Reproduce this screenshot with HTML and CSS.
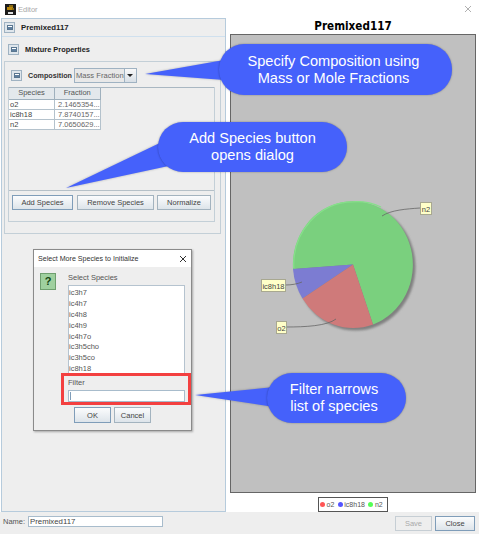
FILE: index.html
```html
<!DOCTYPE html>
<html lang="en">
<head>
<meta charset="utf-8">
<title>Editor</title>
<link rel="stylesheet" href="styles.css">
</head>
<body>
<div class="window">
  <header class="titlebar">
    <svg class="app-icon" viewBox="0 0 11 11"><rect width="11" height="11" fill="#1c1c1c"/><path d="M2 3h6v3H2z" fill="#b8860b"/><path d="M4 1h4v2H4zM7 4h2v2H7z" fill="#8a6a10"/><rect x="3" y="8" width="5" height="2" fill="#ddd"/></svg>
    <span class="title-text">Editor</span>
    <svg class="close-x" viewBox="0 0 8 8"><path d="M1 1l6 6M7 1l-6 6" stroke="#b0b0b0" stroke-width="1" fill="none"/></svg>
  </header>
  <main class="main">
    <section class="left">
      <div class="row-top">
        <span class="toggle"><i></i></span><b class="top-name">Premixed117</b>
      </div>
      <div class="row-mix">
        <span class="toggle"><i></i></span><b class="mix-name">Mixture Properties</b>
      </div>
      <div class="props">
        <div class="comp-row">
          <span class="toggle"><i></i></span>
          <b class="comp-label">Composition</b>
          <span class="combo"><span class="combo-text">Mass Fraction</span><span class="combo-arrow"></span></span>
        </div>
        <div class="group">
          <div class="table-frame">
            <table class="species-table">
              <thead><tr><th>Species</th><th>Fraction</th></tr></thead>
              <tbody>
                <tr><td>o2</td><td class="num">2.1465354...</td></tr>
                <tr><td>ic8h18</td><td class="num">7.8740157...</td></tr>
                <tr><td>n2</td><td class="num">7.0650629...</td></tr>
              </tbody>
            </table>
          </div>
          <div class="btn-row">
            <button class="btn focus btn-add">Add Species</button>
            <button class="btn btn-remove">Remove Species</button>
            <button class="btn btn-norm">Normalize</button>
          </div>
        </div>
      </div>
    </section>
    <section class="right">
      <h1 class="chart-title">Premixed117</h1>
      <div class="plot">
        <svg class="pie" viewBox="0 0 244 457">
          <defs><filter id="soft" x="-10%" y="-10%" width="120%" height="120%"><feGaussianBlur stdDeviation="1"/></filter></defs>
          <ellipse cx="124.500" cy="232" rx="60" ry="63.500" fill="#808080" filter="url(#soft)"/>
          <path d="M122 229.500 L142 289.500 A60 63.500 0 1 0 62 234 Z" fill="#7ad07e"/>
          <path d="M62.800 233 A59.500 63 0 0 1 122 166.800 A59.500 63 0 0 1 150 172" fill="none" stroke="#86e08a" stroke-width="1.200"/>
          <path d="M122 229.500 L62 234 A60 63.500 0 0 0 71.500 263.500 Z" fill="#7c7cd2"/>
          <path d="M122 229.500 L71.500 263.500 A60 63.500 0 0 0 142 289.500 Z" fill="#cf7a7a"/>
          <path d="M189 173 C175 174 160 175 151 181" fill="none" stroke="#666" stroke-width=".8"/>
          <path d="M54 250 C61 250 66 249 71 247" fill="none" stroke="#666" stroke-width=".8"/>
          <path d="M55 292 C74 292 96 291 105 284" fill="none" stroke="#666" stroke-width=".8"/>
          <g class="tip"><rect x="189.500" y="167.500" width="11" height="12"/><text x="195" y="176.500">n2</text></g>
          <g class="tip"><rect x="30.500" y="244.500" width="24" height="12"/><text x="42.500" y="253.500">ic8h18</text></g>
          <g class="tip"><rect x="45.500" y="286.500" width="10" height="12"/><text x="50.500" y="295.500">o2</text></g>
        </svg>
      </div>
      <div class="legend-row">
        <div class="legend">
          <i class="dot red"></i><span>o2</span>
          <i class="dot blue"></i><span>ic8h18</span>
          <i class="dot green"></i><span>n2</span>
        </div>
      </div>
    </section>
  </main>
  <footer class="footer">
    <label class="name-label">Name:</label>
    <span class="name-input">Premixed117</span>
    <span class="spacer"></span>
    <button class="btn disabled btn-save">Save</button>
    <button class="btn focus btn-close">Close</button>
  </footer>
</div>

<div class="dialog">
  <div class="dlg-title"><span>Select More Species to Initialize</span>
    <svg class="dlg-x" viewBox="0 0 8 8"><path d="M1 1l6 6M7 1l-6 6" stroke="#333" stroke-width="1" fill="none"/></svg>
  </div>
  <div class="dlg-body">
    <div class="q-icon">?</div>
    <div class="dlg-main">
      <div class="dlg-label">Select Species</div>
      <ul class="list">
        <li>ic3h7</li><li>ic4h7</li><li>ic4h8</li><li>ic4h9</li><li>ic4h7o</li><li>ic3h5cho</li><li>ic3h5co</li><li>ic8h18</li>
      </ul>
      <div class="dlg-label filter-label">Filter</div>
      <div class="filter-input"><i class="caret"></i></div>
    </div>
  </div>
  <div class="dlg-btns">
    <button class="btn focus btn-ok">OK</button>
    <button class="btn btn-cancel">Cancel</button>
  </div>
</div>

<div class="red-box"></div>

<svg class="tails" viewBox="0 0 479 534">
  <path d="M145 74 L224 60 L224 80 Z" fill="#4561fb"/>
  <path d="M66 188 L166 140 L178 164 Z" fill="#4561fb"/>
  <path d="M195 395 L274 387 L274 407 Z" fill="#4561fb"/>
</svg>
<div class="bubble b1">Specify Composition using<br>Mass or Mole Fractions</div>
<div class="bubble b2">Add Species button<br>opens dialog</div>
<div class="bubble b3">Filter narrows<br>list of species</div>
</body>
</html>
```

FILE: styles.css
```css
* { box-sizing: border-box; }
html, body { margin: 0; padding: 0; background: #fff; }
body {
  width: 479px; height: 534px; overflow: hidden; position: relative;
  font-family: "Liberation Sans", Arial, sans-serif; font-size: 7.500px; color: #444;
}
.window { width: 479px; height: 534px; display: flex; flex-direction: column; }

.titlebar { height: 18px; display: flex; align-items: center; padding: 0 6px 0 5px; flex: none; }
.app-icon { width: 11px; height: 11px; margin-right: 2px; }
.title-text { color: #a8a8a8; font-size: 7.500px; flex: 1; }
.close-x { width: 8px; height: 8px; margin-right: 1px; }

.main { flex: 1; display: flex; min-height: 0; }
.left {
  width: 225px; margin-left: 1px; background: #eeeeee;
  border: 1px solid #b6cbdc; display: flex; flex-direction: column; flex: none;
}
.row-top { height: 18px; display: flex; align-items: center; padding-left: 2px; border-bottom: 1px solid #cfe0ee; flex: none; }
.top-name { margin-left: 6px; color: #222; font-size: 7.800px; }
.row-mix { height: 24px; display: flex; align-items: center; padding-left: 6px; flex: none; }
.mix-name { margin-left: 6px; color: #222; font-size: 7.400px; }
.toggle {
  width: 11px; height: 11px; border: 1px solid #9fb2c2; background: #dfe6ec;
  display: inline-flex; align-items: center; justify-content: center; flex: none;
}
.toggle i { width: 6px; height: 5px; background: #5f7f9f; border: 1px solid #5a7690; position: relative; display: block; }
.toggle i::after { content: ""; position: absolute; left: 0; right: 0; top: 0; height: 1px; background: #fff; }

.props {
  margin: 0 4px 0 2px; height: 173px; border: 1px solid #c3cfd7; padding: 0 5px 0 3px;
  display: flex; flex-direction: column; flex: none;
}
.comp-row { height: 25px; display: flex; align-items: center; padding: 2px 0 0 3px; flex: none; }
.comp-label { margin-left: 6px; width: 43px; color: #333; font-size: 7.200px; white-space: nowrap; }
.combo {
  margin-left: 3px; width: 63px; height: 15px; border: 1px solid #9fb2c2; background: #e8e8e8;
  display: flex; align-items: stretch; flex: none;
}
.combo-text { flex: 1; padding-left: 1px; line-height: 13px; color: #666; font-size: 7.600px; white-space: nowrap; }
.combo-arrow { width: 12px; border-left: 1px solid #9fb2c2; background: linear-gradient(#f8f8f8, #d8dfe6); position: relative; flex: none; }
.combo-arrow::after {
  content: ""; position: absolute; left: 2px; top: 5px;
  border-left: 3px solid transparent; border-right: 3px solid transparent; border-top: 3px solid #222;
}
.group { height: 135px; border: 1px solid #c3cfd7; border-top: 0; flex: none; }
.table-frame { height: 104px; border-bottom: 1px solid #b5c0c8; border-top: 1px solid #a9b7c2; }
.species-table { border-collapse: collapse; table-layout: fixed; width: 91px; }
.species-table th {
  width: 45.500px; height: 11px; padding: 0; font-weight: normal; color: #555; font-size: 7.500px; line-height: 10px;
  background: #e3e8ec; border: 1px solid #9fb0bd; border-top: 0; border-left: 0;
}
.species-table td {
  height: 10px; padding: 0 0 0 1px; background: #fff; border: 1px solid #b4c2cc; border-left: 0; border-top: 0;
  font-size: 7.500px; line-height: 9px; color: #444; white-space: nowrap; overflow: hidden;
}
.species-table td.num { padding-left: 3px; color: #666; }
.btn-row { display: flex; padding: 4px 0 0 3px; }
.btn {
  height: 15px; padding: 0; font-family: inherit; font-size: 7.500px; color: #444;
  border: 1px solid #a3b3bf; background: linear-gradient(#fbfcfd, #dde4ea); flex: none;
}
.btn.focus { border-color: #7f9db9; }
.btn-add { width: 61px; }
.btn-remove { width: 77px; margin-left: 4px; }
.btn-norm { width: 54px; margin-left: 3px; }

.right { flex: 1; min-width: 0; display: flex; flex-direction: column; padding: 0 3px 0 4px; }
.chart-title { margin: 0; height: 16px; text-align: center; font-family: "DejaVu Sans", sans-serif; font-stretch: condensed; font-size: 11.600px; line-height: 17px; font-weight: bold; color: #000; flex: none; }
.plot { height: 459px; width: 246px; background: #c0c0c0; border: 1px solid #666; flex: none; overflow: hidden; }
.pie { display: block; width: 244px; height: 457px; }
.tip rect { fill: #ffffc8; stroke: #a8a890; stroke-width: 1; }
.tip text { font-family: "Liberation Sans", sans-serif; font-size: 7.500px; fill: #444; text-anchor: middle; }
.legend-row { display: flex; justify-content: center; padding-top: 4px; }
.legend {
  height: 15px; width: 70px; border: 1px solid #555; display: flex; align-items: center; padding-left: 1px;
  font-size: 7px; color: #555; background: #fff;
}
.dot { width: 5px; height: 5px; border-radius: 50%; margin: 0 1.500px 0 0; flex: none; }
.legend span { margin-right: 3.500px; white-space: nowrap; }
.red { background: #f55; }
.blue { background: #55f; }
.green { background: #5f5; }

.footer { height: 22px; background: #eeeeee; display: flex; align-items: flex-start; padding: 4px 4px 0 3px; flex: none; }
.name-label { line-height: 11px; width: 22px; color: #555; }
.name-input { width: 135px; height: 11px; margin-left: 3px; background: #fff; border: 1px solid #a8bccc; line-height: 9px; padding-left: 1px; font-size: 7.800px; color: #444; }
.spacer { flex: 1; }
.btn-save { width: 37px; }
.btn-close { width: 40px; margin-left: 3px; }
.disabled { color: #aaa; background: #eee; border-color: #c6ced4; }

.dialog {
  position: absolute; left: 33px; top: 249px; width: 159px; height: 182px;
  background: #eeeeee; border: 1px solid #8a8a8a; box-shadow: 1px 1px 2px rgba(0,0,0,.3);
  display: flex; flex-direction: column;
}
.dlg-title { height: 17px; background: #fff; display: flex; align-items: center; justify-content: space-between; padding: 0 4px 0 4px; color: #333; font-size: 7.100px; flex: none; }
.dlg-x { width: 8px; height: 8px; }
.dlg-body { display: flex; padding: 6px 0 0 6px; flex: none; }
.q-icon {
  width: 16px; height: 17px; background: #9fd09f; border: 1px solid #6f9f6f; color: #114411;
  font: bold 11px/15px "Liberation Sans", sans-serif; text-align: center; flex: none;
}
.dlg-main { margin-left: 12px; width: 117px; }
.dlg-label { height: 12px; color: #555; font-size: 7.500px; line-height: 10px; }
.list { list-style: none; margin: 0; padding: 2px 0 0 0; height: 89px; background: #fff; border: 1px solid #b5c3cf; border-bottom: 0; overflow: hidden; }
.list li { height: 10.900px; line-height: 10.900px; font-size: 7.500px; color: #555; }
.filter-label { margin-top: 3px; height: 13px; line-height: 11px; }
.filter-input { height: 12px; background: #fff; border: 1px solid #a8bccc; position: relative; }
.caret { position: absolute; left: 1px; top: 1px; width: 1px; height: 8px; background: #7f9db9; }
.dlg-btns { display: flex; padding: 5px 0 0 40px; }
.btn-ok { width: 37px; height: 16px; }
.btn-cancel { width: 37px; height: 16px; margin-left: 3px; }

.red-box { position: absolute; left: 61px; top: 373px; width: 130px; height: 32px; border: 3px solid #f34040; }
.tails { position: absolute; left: 0; top: 0; width: 479px; height: 534px; filter: drop-shadow(0 0 1px rgba(0,0,0,.25)); }
.bubble {
  position: absolute; background: #4561fb; color: #fff; text-align: center;
  font-family: "Liberation Sans", Arial, sans-serif; font-size: 14.600px; line-height: 17px;
  border-radius: 25px; display: flex; align-items: center; justify-content: center;
  box-shadow: 0 0 2px rgba(0,0,0,.35);
}
.b1 { left: 219px; top: 44px; width: 233px; height: 51px; padding-right: 4px; }
.b2 { left: 158px; top: 122px; width: 189px; height: 50px; }
.b3 { left: 267px; top: 373px; width: 139px; height: 50px; padding-right: 5px; }
```
